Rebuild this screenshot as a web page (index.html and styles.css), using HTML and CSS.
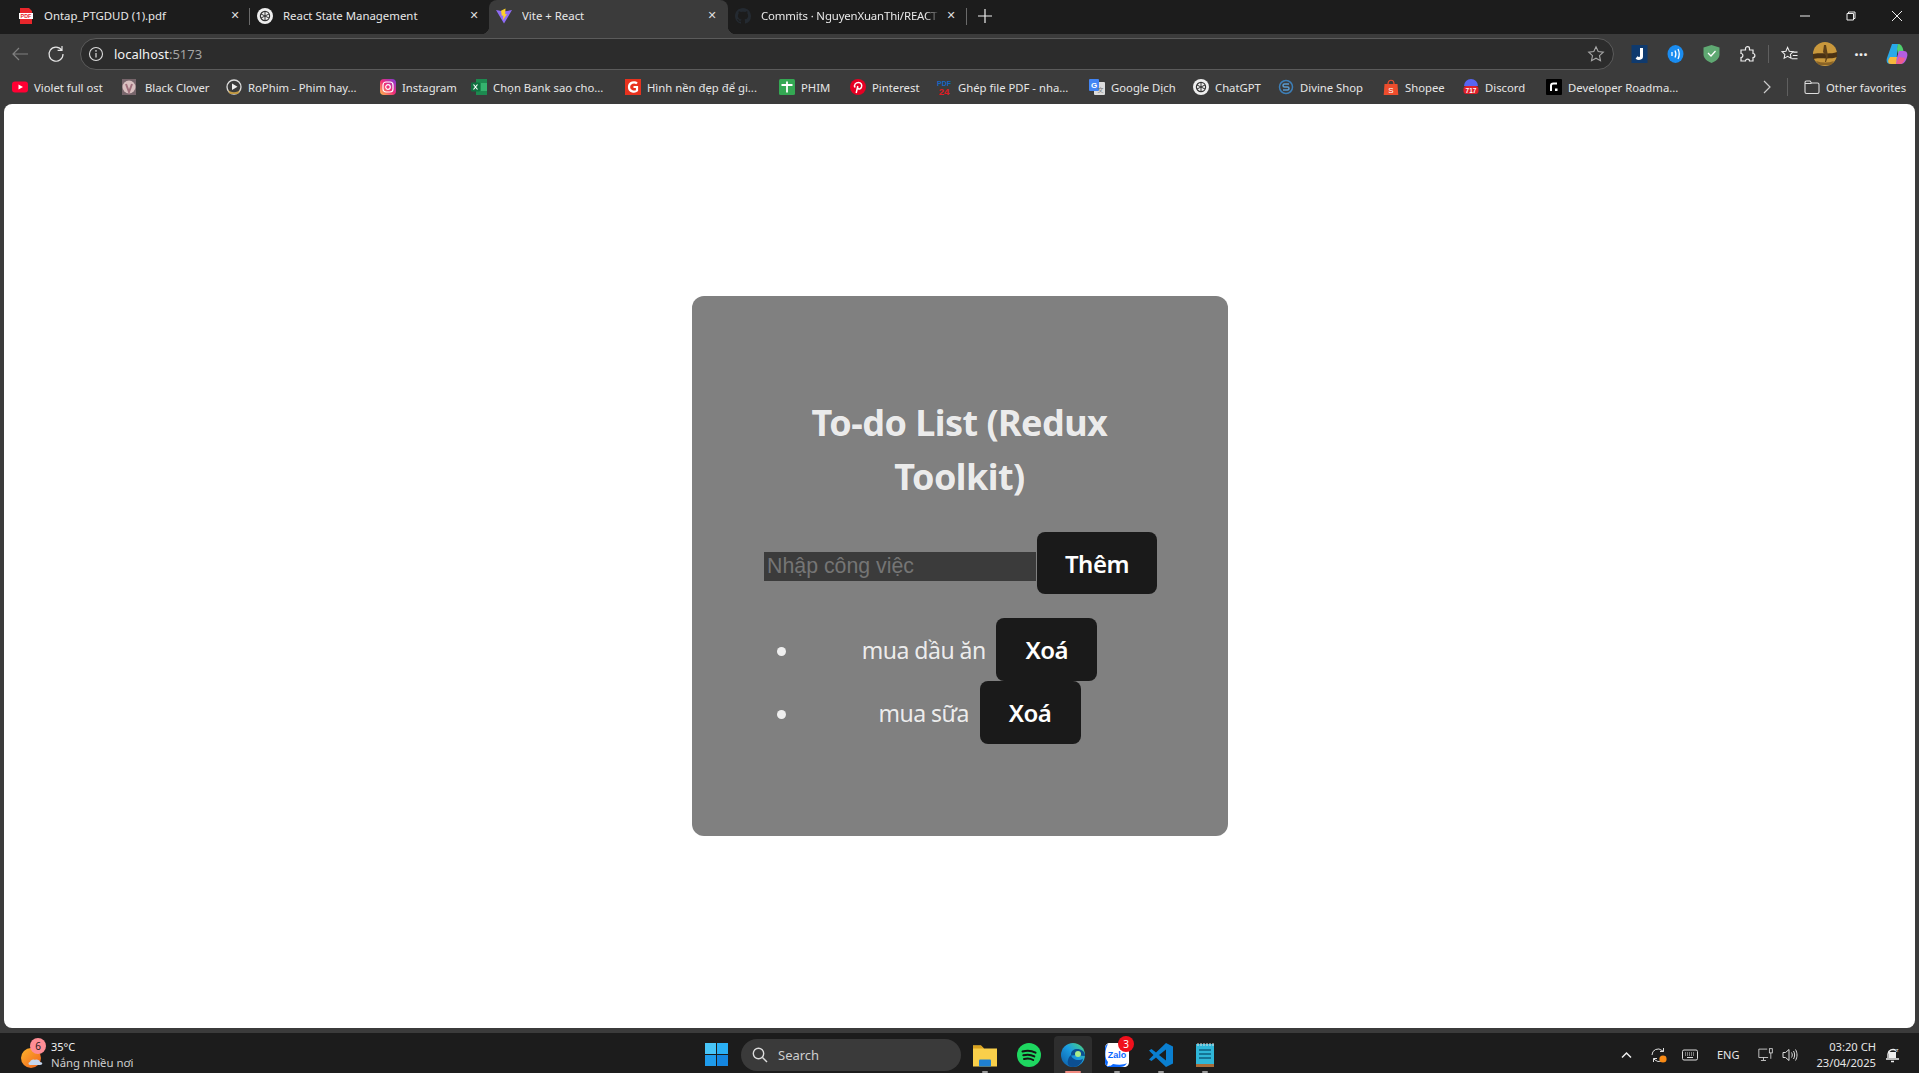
FILE: index.html
```html
<!DOCTYPE html>
<html lang="en">
<head>
    <meta charset="UTF-8">
    <meta name="viewport" content="width=device-width, initial-scale=1.0">
    <title>Vite + React</title>
    <link rel="stylesheet" href="styles.css">
</head>
<body>
    <!-- tabs -->
    <div class="tabstrip">
        <div class="tab tab-sep">
            <svg class="ico" viewBox="0 0 16 16"><path d="M2 0h9l3 3v13H2z" fill="#e8262b"/><rect x="1" y="5" width="14" height="6" fill="#fff"/><text x="8" y="10" font-size="5.4" font-weight="700" text-anchor="middle" fill="#e8262b" font-family="Liberation Sans">PDF</text></svg>
            <span class="tab-title">Ontap_PTGDUD (1).pdf</span>
            <span class="tab-close">&#x2715;</span>
        </div>
        <div class="tab">
            <svg class="ico" viewBox="0 0 16 16"><circle cx="8" cy="8" r="8" fill="#eee"/><circle cx="8" cy="8" r="4.6" fill="none" stroke="#333" stroke-width="1.2"/><path d="M4 6l8 4M4 10l8-4M8 3.5v9" stroke="#333" stroke-width="1"/></svg>
            <span class="tab-title">React State Management</span>
            <span class="tab-close">&#x2715;</span>
        </div>
        <div class="tab tab-active">
            <svg class="ico" viewBox="0 0 16 16"><path d="M0 2l8 1.5L16 2 8 15.5z" fill="#8f6cf6"/><path d="M9.5 0.5L5 2.8l.8 5 1.6-.4-.4 4.6L11 6l-1.8.3z" fill="#fdd22b"/></svg>
            <span class="tab-title">Vite + React</span>
            <span class="tab-close">&#x2715;</span>
        </div>
        <div class="tab tab-sep">
            <svg class="ico" viewBox="0 0 16 16"><path fill="#242a31" d="M8 0C3.58 0 0 3.58 0 8c0 3.54 2.29 6.53 5.47 7.59.4.07.55-.17.55-.38 0-.19-.01-.82-.01-1.49-2.01.37-2.53-.49-2.69-.94-.09-.23-.48-.94-.82-1.13-.28-.15-.68-.52-.01-.53.63-.01 1.08.58 1.23.82.72 1.21 1.87.87 2.33.66.07-.52.28-.87.51-1.07-1.78-.2-3.64-.89-3.64-3.95 0-.87.31-1.59.82-2.15-.08-.2-.36-1.02.08-2.12 0 0 .67-.21 2.2.82.64-.18 1.32-.27 2-.27s1.36.09 2 .27c1.53-1.04 2.2-.82 2.2-.82.44 1.1.16 1.92.08 2.12.51.56.82 1.27.82 2.15 0 3.07-1.87 3.75-3.65 3.95.29.25.54.73.54 1.48 0 1.07-.01 1.93-.01 2.2 0 .21.15.46.55.38A8.013 8.013 0 0016 8c0-4.42-3.58-8-8-8z"/></svg>
            <span class="tab-title tab-fade">Commits · NguyenXuanThi/REACT</span>
            <span class="tab-close">&#x2715;</span>
        </div>
        <svg class="new-tab" viewBox="0 0 14 14"><path d="M7 0v14M0 7h14" stroke="#eee" stroke-width="1.2"/></svg>
        <div class="win-controls">
            <svg viewBox="0 0 10 10"><path d="M0 5h10" stroke="#eee"/></svg>
            <svg viewBox="0 0 10 10"><path d="M2.5 2V1h6.5v6.5H8M1 2.5h6.5V9H1z" fill="none" stroke="#eee"/></svg>
            <svg viewBox="0 0 10 10"><path d="M0 0l10 10M10 0L0 10" stroke="#eee"/></svg>
        </div>
    </div>

    <!-- toolbar -->
    <div class="toolbar">
        <svg class="nav-btn nav-back" viewBox="0 0 18 18"><path d="M17 9H2M8 3L2 9l6 6" fill="none" stroke="#808080" stroke-width="1.2"/></svg>
        <svg class="nav-btn nav-reload" viewBox="0 0 18 18"><path d="M14.6 5A7 7 0 1 0 16 9M15 1v4.4h-4.4" fill="none" stroke="#e6e6e6" stroke-width="1.2"/></svg>
        <div class="address">
            <svg class="addr-info" viewBox="0 0 16 16"><circle cx="8" cy="8" r="6.5" fill="none" stroke="#ddd" stroke-width="1.1"/><path d="M8 7v4.5" stroke="#ddd" stroke-width="1.2"/><circle cx="8" cy="4.9" r=".8" fill="#ddd"/></svg>
            <span class="addr-url">localhost<span class="addr-port">:5173</span></span>
            <svg class="addr-star" viewBox="0 0 18 18"><path d="M9 1.8l2.2 4.7 5.1.6-3.8 3.5 1 5.1L9 13.2l-4.5 2.5 1-5.1L1.7 7.1l5.1-.6z" fill="none" stroke="#a8a8a8" stroke-width="1.1"/></svg>
        </div>
        <div class="ext-group">
            <span class="ext"><svg viewBox="0 0 16 18"><rect width="16" height="18" fill="#0f3a6e"/><path d="M10 3v8.500c0 2-3 2.500-5 1" fill="none" stroke="#fff" stroke-width="3"/></svg></span>
            <span class="ext"><svg viewBox="0 0 16 18"><ellipse cx="8" cy="9" rx="8" ry="9" fill="#1a8cf0"/><path d="M4.500 7v4M7.500 5.500c1 2 1 5 0 7M10.500 4c1.500 3 1.500 7 0 10" fill="none" stroke="#fff" stroke-width="1.300"/></svg></span>
            <span class="ext"><svg viewBox="0 0 16 18"><path d="M8 0l8 2.500v7c0 4-4 7-8 8.500-4-1.500-8-4.500-8-8.500v-7z" fill="#5fa872"/><path d="M4.500 8l3 3 4.500-5" fill="none" stroke="#fff" stroke-width="1.300"/></svg></span>
            <span class="ext"><svg viewBox="0 0 16 18"><path d="M6 3.500C6 1 10 1 10 3.500V5h3.500v3.500c2.500 0 2.500 4 0 4V16H10c0-2.500-4-2.500-4 0H1.500v-3.500c2.500 0 2.500-4 0-4V5H6z" fill="none" stroke="#eee" stroke-width="1.200"/></svg></span>
            <span class="ext-sep"></span>
            <span class="ext"><svg viewBox="0 0 18 18"><path d="M7 2l1.800 4 4.200.5-3.100 2.900.8 4.200L7 11.500l-3.700 2.100.8-4.200L1 6.500 5.200 6z" fill="none" stroke="#eee" stroke-width="1.100"/><path d="M13 7h4.500M12.500 10.500h5M11.500 14h6" stroke="#eee" stroke-width="1.100"/></svg></span>
            <span class="ext"><svg class="avatar" viewBox="0 0 24 24"><circle cx="12" cy="12" r="12" fill="#c9983c"/><path d="M0 12c6-2 16 1 24-2v5C16 18 6 15 0 17z" fill="#4a3214"/><path d="M11 3l2 0 2 11-2 6h-1l1-6-3-4z" fill="#5e4119"/><path d="M3 19c6 2 12 2 18 0l-3 4H6z" fill="#8a6426"/></svg></span>
            <span class="ext ext-dots">···</span>
            <span class="ext"><svg class="copilot" viewBox="0 0 22 22"><path d="M6 1h6l-2 20H4C1 21 0 18 1 15z" fill="#28a9e8"/><path d="M12 1c3 0 4 2 5 5l2 8-6 0-2-8z" fill="#4fd06e"/><path d="M13 8h5c3 0 4 3 3 6-1 4-3 7-6 7h-6z" fill="#b45ee0"/><path d="M4 14h7l-1 7H5C2 21 1 18 4 14z" fill="#f6b73c"/><path d="M10 21h4c2 0 4-2 5-6l-6-1z" fill="#ef5d8c"/></svg></span>
        </div>
    </div>

    <!-- bookmarks -->
    <div class="bookmarks">
        <div class="bm"><svg class="ico" viewBox="0 0 16 16"><rect y="2.500" width="16" height="11" rx="3" fill="#ff0033"/><path d="M6.500 5.500v5L11 8z" fill="#fff"/></svg><span>Violet full ost</span></div>
        <div class="bm bm-wide"><svg class="ico" viewBox="0 0 16 16"><rect x="1" width="14" height="16" fill="#77656b"/><circle cx="8" cy="8" r="6.500" fill="#d9c0c0"/><path d="M5 5l3 8 3-8" fill="none" stroke="#a0707c" stroke-width="2"/></svg><span>Black Clover</span></div>
        <div class="bm"><svg class="ico" viewBox="0 0 16 16"><circle cx="8" cy="8" r="7" fill="none" stroke="#ddd" stroke-width="1.300"/><path d="M6 4.500v6.500L11.500 7.800z" fill="#eee"/><path d="M1.500 10.500c3 3.500 10 3.500 13 0L12 15H4z" fill="#c29a44"/></svg><span>RoPhim - Phim hay...</span></div>
        <div class="bm"><svg class="ico" viewBox="0 0 16 16"><defs><linearGradient id="ig" x1="0" y1="1" x2="1" y2="0"><stop offset="0" stop-color="#fdc04c"/><stop offset=".5" stop-color="#f02c78"/><stop offset="1" stop-color="#7b3be0"/></linearGradient></defs><rect width="16" height="16" rx="4" fill="url(#ig)"/><rect x="3" y="3" width="10" height="10" rx="3" fill="none" stroke="#fff" stroke-width="1.200"/><circle cx="8" cy="8" r="2.300" fill="none" stroke="#fff" stroke-width="1.200"/></svg><span>Instagram</span></div>
        <div class="bm"><svg class="ico" viewBox="0 0 16 16"><rect x="5" width="11" height="16" fill="#1d8a50"/><rect x="10" y="4" width="6" height="8" fill="#35b36e"/><rect y="3.500" width="9" height="9" rx="1" fill="#107040"/><path d="M2.500 5.500l4 5M6.500 5.500l-4 5" stroke="#fff" stroke-width="1.200"/></svg><span>Chọn Bank sao cho...</span></div>
        <div class="bm"><svg class="ico" viewBox="0 0 16 16"><rect width="16" height="16" fill="#e8321e"/><path d="M12 4.500C10 2.500 4 3 4 8s6 5.500 8 3.500V8H8.500" fill="none" stroke="#fff" stroke-width="2.200"/></svg><span>Hình nền đẹp để gi...</span></div>
        <div class="bm"><svg class="ico" viewBox="0 0 16 16"><rect width="16" height="16" rx="1.500" fill="#34a853"/><path d="M2.500 6h11M8 2.500v11" stroke="#fff" stroke-width="1.800"/></svg><span>PHIM</span></div>
        <div class="bm"><svg class="ico" viewBox="0 0 16 16"><circle cx="8" cy="8" r="8" fill="#e60023"/><path d="M6.200 14l1.600-7M5 8.500C3.500 5.500 6 3.500 8.500 3.500c2.500 0 3.800 2 3 4.500-.8 2.300-3 2.500-3.900 1" fill="none" stroke="#fff" stroke-width="1.500"/></svg><span>Pinterest</span></div>
        <div class="bm"><svg class="ico" viewBox="0 0 16 16"><text x="8" y="7" font-size="7" font-weight="700" text-anchor="middle" fill="#1467c4" font-family="Liberation Sans">PDF</text><text x="8" y="15.500" font-size="9.500" font-weight="700" text-anchor="middle" fill="#e01b22" font-family="Liberation Sans">24</text></svg><span>Ghép file PDF - nha...</span></div>
        <div class="bm"><svg class="ico" viewBox="0 0 16 16"><rect x="5" y="3" width="11" height="13" rx="1" fill="#dcdcdc"/><rect width="10" height="12" rx="1" fill="#4285f4"/><text x="5" y="9" font-size="8" font-weight="700" text-anchor="middle" fill="#fff" font-family="Liberation Sans">G</text><text x="11.500" y="13" font-size="6" text-anchor="middle" fill="#777" font-family="Noto Sans CJK SC">文</text></svg><span>Google Dịch</span></div>
        <div class="bm"><svg class="ico" viewBox="0 0 16 16"><circle cx="8" cy="8" r="8" fill="#eee"/><circle cx="8" cy="8" r="4.600" fill="none" stroke="#333" stroke-width="1.200"/><path d="M4 6l8 4M4 10l8-4M8 3.500v9" stroke="#333"/></svg><span>ChatGPT</span></div>
        <div class="bm"><svg class="ico" viewBox="0 0 16 16"><circle cx="8" cy="8" r="6.500" fill="none" stroke="#3d7fb8" stroke-width="1.500"/><path d="M11 5H6.500C4.500 5 4.500 8 6.500 8h3c2 0 2 3 0 3H5" fill="none" stroke="#5a9bd0" stroke-width="1.500"/></svg><span>Divine Shop</span></div>
        <div class="bm"><svg class="ico" viewBox="0 0 16 16"><path d="M1.500 5h13l.8 11H.7z" fill="#ee4d2d"/><path d="M5 5c0-5 6-5 6 0" fill="none" stroke="#ee4d2d" stroke-width="1.200"/><text x="8" y="14" font-size="8" text-anchor="middle" fill="#fff" font-family="Liberation Sans">S</text></svg><span>Shopee</span></div>
        <div class="bm"><svg class="ico" viewBox="0 0 16 16"><path d="M1 7a7 7 0 0 1 14 0z" fill="#5865f2"/><rect x=".5" y="7" width="15" height="8" rx="3" fill="#e0202a"/><text x="8" y="14" font-size="6.500" font-weight="700" text-anchor="middle" fill="#fff" font-family="Liberation Sans">717</text></svg><span>Discord</span></div>
        <div class="bm"><svg class="ico" viewBox="0 0 16 16"><rect width="16" height="16" rx="1" fill="#000"/><path d="M5 12V6.500C5 5 6 4.500 7.500 4.500H11" fill="none" stroke="#fff" stroke-width="2"/><rect x="9" y="9.500" width="2.500" height="2.500" fill="#fff"/></svg><span>Developer Roadma...</span></div>
        <svg class="bm-more" viewBox="0 0 8 14"><path d="M1 1l6 6-6 6" fill="none" stroke="#ccc" stroke-width="1.200"/></svg>
        <span class="bm-sep"></span>
        <div class="bm"><svg class="ico" viewBox="0 0 16 16"><path d="M1 13V3.500C1 2.500 1.500 2 2.500 2H6l1.500 2h6c1 0 1.500.5 1.500 1.500V13c0 1-.5 1.500-1.500 1.500h-11C1.500 14.500 1 14 1 13zM1 4.500h6.500" fill="none" stroke="#ddd" stroke-width="1.100"/></svg><span>Other favorites</span></div>
    </div>

    <!-- page -->
    <main class="page">
        <div class="card">
            <h1>To-do List (Redux Toolkit)</h1>
            <div class="add-form">
                <input type="text" class="todo-input" placeholder="Nhập công việc">
                <button class="btn btn-add">Thêm</button>
            </div>
            <ul class="todo-list">
                <li>mua dầu ăn <button class="btn btn-del">Xoá</button></li>
                <li>mua sữa <button class="btn btn-del">Xoá</button></li>
            </ul>
        </div>
    </main>

    <!-- taskbar -->
    <footer class="taskbar">
        <div class="weather">
            <svg class="weather-ico" viewBox="0 0 23 20"><defs><linearGradient id="sun" x1="0" y1="0" x2="1" y2="1"><stop offset="0" stop-color="#fdb52c"/><stop offset="1" stop-color="#f0601e"/></linearGradient></defs><circle cx="10" cy="10" r="10" fill="url(#sun)"/><path d="M9 17c-2 0-2-3 0-3 .5-2 3-3 5-2 1.500-1 5 0 5 2 3 0 3 3 0 3z" fill="#c5d6ee"/></svg>
            <span class="weather-badge">6</span>
            <div class="weather-text">
                <span>35°C</span>
                <span class="weather-sub">Nắng nhiều nơi</span>
            </div>
        </div>
        <div class="tb-center">
            <svg class="start-ico" viewBox="0 0 23 23"><rect width="11" height="11" fill="#48c5f8"/><rect x="12" width="11" height="11" fill="#2ab0f5"/><rect y="12" width="11" height="11" fill="#1f9cec"/><rect x="12" y="12" width="11" height="11" fill="#1486e0"/></svg>
            <div class="search-pill">
                <svg viewBox="0 0 16 16"><circle cx="6.500" cy="6.500" r="5.200" fill="none" stroke="#ddd" stroke-width="1.400"/><path d="M10.500 10.500l4.500 4.500" stroke="#ddd" stroke-width="1.400"/></svg>
                <span>Search</span>
            </div>
            <div class="app app-open"><svg viewBox="0 0 24 23"><path d="M0 2h8l3 3h13v18H0z" fill="#f9cf4a"/><path d="M0 2h8l3 3H0z" fill="#d9a11f"/><rect x="6" y="16" width="12" height="7" rx="1" fill="#1f80d0"/></svg></div>
            <div class="app"><svg viewBox="0 0 24 24"><circle cx="12" cy="12" r="12" fill="#1ed760"/><path d="M5.500 8.500c4-1.200 9-1 13 1.200M6.300 12.300c3.500-1 7.700-.8 11 1.100M7 16c3-.8 6.500-.6 9.200 1" fill="none" stroke="#141414" stroke-width="2" stroke-linecap="round"/></svg></div>
            <div class="app app-active"><svg viewBox="0 0 24 24"><defs><linearGradient id="edge" x1="0" y1="1" x2="1" y2="0"><stop offset="0" stop-color="#0c59a4"/><stop offset=".55" stop-color="#1b9de2"/><stop offset="1" stop-color="#4fdb72"/></linearGradient></defs><circle cx="12" cy="12" r="12" fill="url(#edge)"/><path d="M24 13c0-5-4-7-8-7-3 0-6 2-6 5 0 4 4 6 7 6 2 0 4-.5 5-1.500C21 21 16 24 12 24c-5 0-6-4-5-7 .5-2 1-3 3-5" fill="#0c4f92"/><circle cx="17" cy="11" r="3" fill="#a8ed8c"/></svg></div>
            <div class="app app-open"><svg viewBox="0 0 24 24"><path d="M5 0h14c3 0 5 2 5 5v14c0 3-2 5-5 5H5c-3 0-5-2-5-5V5c0-3 2-5 5-5z" fill="#fff"/><path d="M3 1C0 6-1 15 3 19l-1 4c4 0 5-1 6-2 5 1 11 1 14-1-2 3-4 4-7 4H5c-3 0-5-2-5-5V5c0-2 1-3 3-4z" fill="#0a68ff"/><text x="12" y="15" font-size="9" font-weight="700" text-anchor="middle" fill="#0a68ff" font-family="Liberation Sans">Zalo</text></svg><span class="app-badge">3</span></div>
            <div class="app app-open"><svg viewBox="0 0 24 24"><path d="M17 0l7 3.500v17L17 24 7 14.500 2.500 18 0 16.500 4.500 12 0 7.500 2.500 6 7 9.500z" fill="#0a7fd0"/><path d="M17 6.500L10 12l7 5.500z" fill="#1c1c1c"/></svg></div>
            <div class="app app-open"><svg viewBox="0 0 18 24"><rect y="1" width="18" height="23" fill="#2fb6d8"/><path d="M2 0v3M5 0v3M8 0v3M11 0v3M14 0v3M17 0v3" stroke="#ddd"/><path d="M3 7h12M3 11h12M3 15h12" stroke="#0e5f80" stroke-width="1.500"/><rect y="21" width="18" height="3" fill="#a86d3a"/></svg></div>
        </div>
        <div class="tray">
            <svg class="tray-chevron" viewBox="0 0 11 7"><path d="M1 6l4.500-4.500L10 6" fill="none" stroke="#eee" stroke-width="1.500"/></svg>
            <svg class="tray-sync" viewBox="0 0 16 16"><path d="M1 8a6 6 0 0 1 10-4.500l1.500 1M12.500 1v3.500H9M14 9a6 6 0 0 1-10 4L2.500 11.500M2.500 15v-3.500H6" fill="none" stroke="#ddd"/><circle cx="12" cy="12" r="3.600" fill="#f98a14"/></svg>
            <svg viewBox="0 0 16 12"><rect x=".5" y="1" width="15" height="10" rx="1.500" fill="none" stroke="#ddd"/><path d="M3 4h10M3 6h10" stroke="#ddd" stroke-dasharray="1 1"/><path d="M5 8.500h6" stroke="#ddd"/></svg>
            <span class="tray-lang">ENG</span>
            <svg viewBox="0 0 19 17"><path d="M12 11.500H1V1.500h10M6.500 11.500v3M3.500 15h6" fill="none" stroke="#ddd"/><rect x="13.500" y="1" width="3.500" height="5" fill="none" stroke="#ddd"/><path d="M15.200 6v7" stroke="#ddd"/></svg>
            <svg viewBox="0 0 16 14"><path d="M1 4.500h2.500L7 1.500v11l-3.500-3H1z" fill="none" stroke="#ddd"/><path d="M9.500 4.500c1 1.500 1 3.500 0 5M11.500 3c1.500 2.500 1.500 5.500 0 8M13.500 1.500c2 3.500 2 7.500 0 11" fill="none" stroke="#ddd"/></svg>
            <div class="clock">
                <span>03:20 CH</span>
                <span>23/04/2025</span>
            </div>
            <svg class="tray-bell" viewBox="0 0 14 16"><path d="M2 11V7a5 5 0 0 1 8-3.500M0 12h13M5 14.500h3" fill="none" stroke="#eee" stroke-width="1.400"/><rect x="3" y="5" width="7" height="6" fill="#eee"/><text x="11" y="5" font-size="6" text-anchor="middle" fill="#eee" font-family="Liberation Sans">z</text></svg>
        </div>
    </footer>
</body>
</html>
```

FILE: styles.css
```css
* {
    box-sizing: border-box;
}

body {
    margin: 0;
    height: 1073px;
    overflow: hidden;
    background-color: #3b3b3b;
    color: #e6e6e6;
    font-family: 'Noto Sans', sans-serif;
    font-size: 12px;
    display: flex;
    flex-direction: column;
}

.ico {
    width: 16px;
    height: 16px;
    flex: none;
}

/* tabs */
.tabstrip {
    height: 34px;
    background-color: #1c1c1c;
    display: flex;
    padding-left: 11px;
    flex: none;
}

.tab {
    width: 239px;
    height: 34px;
    display: flex;
    align-items: center;
    gap: 10px;
    padding: 0 10px 3px 7px;
    position: relative;
}

.tab:nth-child(1),
.tab:nth-child(2) {
    padding-right: 9px;
}

.tab-sep::after {
    content: '';
    position: absolute;
    right: 0;
    top: 8px;
    height: 17px;
    width: 1px;
    background-color: #6a6a6a;
}

.tab-active {
    background-color: #3b3b3b;
    border-radius: 8px 8px 0 0;
}

.tab-active::before,
.tab-active::after {
    content: '';
    position: absolute;
    bottom: 0;
    width: 8px;
    height: 8px;
}

.tab-active::before {
    left: -8px;
    background: radial-gradient(circle at 0 0, transparent 8px, #3b3b3b 8.5px);
}

.tab-active::after {
    right: -8px;
    background: radial-gradient(circle at 100% 0, transparent 8px, #3b3b3b 8.5px);
}

.tab-title {
    flex: 1;
    min-width: 0;
    overflow: hidden;
    white-space: nowrap;
    font-size: 11.4px;
    color: #e8e8e8;
}

.tab-fade {
    margin-right: -5px;
    letter-spacing: -0.15px;
    -webkit-mask-image: linear-gradient(to right, #000 92%, transparent);
    mask-image: linear-gradient(to right, #000 92%, transparent);
}

.tab-close {
    width: 12px;
    text-align: center;
    font-size: 11px;
    color: #dcdcdc;
    font-family: 'DejaVu Sans', sans-serif;
}

.new-tab {
    width: 14px;
    height: 14px;
    margin: 9px 0 0 11px;
}

.win-controls {
    margin-left: auto;
    display: flex;
    align-items: center;
    gap: 36px;
    padding: 0 17px 2px 0;
}

.win-controls svg {
    width: 10px;
    height: 10px;
}

/* toolbar */
.toolbar {
    height: 36px;
    display: flex;
    align-items: center;
    flex: none;
    padding-top: 4px;
}

.nav-btn {
    width: 18px;
    height: 18px;
    flex: none;
}

.nav-back {
    margin: 0 9px 0 11px;
}

.nav-reload {
    margin: 0 15px 0 9px;
}

.address {
    flex: 1;
    height: 32px;
    background-color: #2c2c2c;
    border: 1px solid #5b5b5b;
    border-radius: 16px;
    display: flex;
    align-items: center;
    padding: 0 8px 0 7px;
}

.addr-info {
    width: 16px;
    height: 16px;
}

.addr-url {
    margin-left: 10px;
    font-size: 13px;
    color: #f2f2f2;
    flex: 1;
}

.addr-port {
    color: #a4a4a4;
}

.addr-star {
    width: 18px;
    height: 18px;
}

.ext-group {
    display: flex;
    align-items: center;
    margin: 0 4px 0 7px;
}

.ext {
    width: 36px;
    height: 30px;
    display: flex;
    align-items: center;
    justify-content: center;
}

.ext svg {
    width: 17px;
    height: 18px;
}

.ext svg.copilot {
    width: 22px;
    height: 22px;
}

.ext svg.avatar {
    width: 24px;
    height: 24px;
}

.ext-sep {
    width: 1px;
    height: 18px;
    margin: 0 2px 0 3px;
    background-color: #5f5f5f;
}

.ext-dots {
    font-size: 16px;
    font-weight: 700;
    color: #eee;
}

/* bookmarks */
.bookmarks {
    height: 34px;
    display: grid;
    grid-template-columns: 109px 105px 154px 91px 154px 154px 71px 86px 153px 104px 85px 105px 80px 83px 217px 24px 17px auto;
    align-items: center;
    padding-left: 12px;
    flex: none;
}

.bm {
    display: flex;
    align-items: center;
    gap: 6px;
    white-space: nowrap;
    font-size: 11.3px;
    color: #e6e6e6;
}

.bm-wide {
    gap: 8px;
}

.bm-more {
    width: 8px;
    height: 14px;
}

.bm-sep {
    width: 1px;
    height: 18px;
    background-color: #5f5f5f;
}

/* page */
.page {
    height: 924px;
    margin: 0 4px;
    background-color: #fff;
    border-radius: 8px;
    display: flex;
    align-items: center;
    justify-content: center;
    flex: none;
}

.card {
    width: 536px;
    padding: 100px 64px 92px;
    background-color: #808080;
    border-radius: 12px;
    color: rgba(255, 255, 255, 0.87);
    text-align: center;
}

h1 {
    margin: 0 0 28px;
    font-size: 36px;
    line-height: 54px;
    font-weight: 700;
    letter-spacing: -0.55px;
}

.add-form {
    display: flex;
    align-items: flex-start;
    justify-content: center;
    gap: 1px;
    padding-left: 2px;
}

.todo-input {
    width: 272px;
    height: 29px;
    margin-top: 20px;
    padding: 0 3px;
    border: none;
    background-color: #3b3b3b;
    color: #fff;
    font-family: 'Liberation Sans', sans-serif;
    font-size: 21.33px;
}

.todo-input::placeholder {
    color: #757575;
}

.btn {
    height: 62px;
    border: none;
    border-radius: 8px;
    background-color: #1a1a1a;
    color: #fff;
    font-family: 'Noto Sans', sans-serif;
    font-size: 24px;
    font-weight: 600;
    letter-spacing: -0.5px;
    padding: 0;
}

.btn-add {
    width: 120px;
}

.btn-del {
    width: 101px;
    height: 63px;
    margin-left: 5px;
    vertical-align: top;
}

.todo-list {
    width: 393px;
    margin: 24px auto 0;
    padding-left: 40px;
    font-size: 23px;
    letter-spacing: -0.5px;
    list-style: none;
}

.todo-list li {
    height: 63px;
    line-height: 65px;
    position: relative;
}

.todo-list li::before {
    content: '';
    position: absolute;
    left: -26.5px;
    top: 29px;
    width: 9px;
    height: 9px;
    border-radius: 50%;
    background-color: rgba(255, 255, 255, 0.87);
}

/* taskbar */
.taskbar {
    margin-top: 5px;
    height: 40px;
    padding-top: 3px;
    background-color: #1c1c1c;
    display: grid;
    grid-template-columns: 705px auto 1fr;
    align-items: center;
    flex: none;
}

.weather {
    display: flex;
    align-items: center;
    position: relative;
    padding-left: 21px;
    font-size: 11px;
    color: #f0f0f0;
}

.weather-ico {
    width: 23px;
    height: 20px;
    margin-top: 6px;
}

.weather-badge {
    position: absolute;
    left: 30px;
    top: -1px;
    width: 16px;
    height: 16px;
    border-radius: 50%;
    background-color: #ff8d95;
    color: #1c1c1c;
    font-size: 10px;
    line-height: 16px;
    text-align: center;
}

.weather-text {
    display: flex;
    flex-direction: column;
    margin-left: 7px;
    line-height: 16px;
}

.weather-sub {
    color: #cfcfcf;
    font-size: 11.4px;
}

.tb-center {
    display: flex;
    align-items: center;
}

.start-ico {
    width: 23px;
    height: 23px;
    margin-right: 13px;
}

.search-pill {
    width: 220px;
    height: 32px;
    border-radius: 16px;
    background-color: #3a3a3a;
    display: flex;
    align-items: center;
    gap: 10px;
    padding-left: 11px;
    margin-right: 2px;
    color: #cfcfcf;
    font-size: 13px;
}

.search-pill svg {
    width: 16px;
    height: 16px;
}

.app {
    width: 44px;
    height: 37px;
    display: flex;
    align-items: center;
    justify-content: center;
    position: relative;
}

.app svg {
    width: 24px;
    height: 24px;
}

.app-open::after,
.app-active::after {
    content: '';
    position: absolute;
    bottom: 0;
    left: 50%;
    width: 6px;
    height: 2px;
    margin-left: -3px;
    background-color: #9a9a9a;
    border-radius: 1px;
}

.app-active::before {
    content: '';
    position: absolute;
    inset: 0 3px;
    background-color: #2e2e2e;
    border-radius: 4px 4px 0 0;
}

.app-active svg {
    position: relative;
}

.app-active::after {
    width: 16px;
    margin-left: -8px;
    background-color: #f08a80;
}

.app-badge {
    position: absolute;
    right: 5px;
    top: 0;
    width: 16px;
    height: 16px;
    border-radius: 50%;
    background-color: #f0101c;
    color: #fff;
    font-size: 10px;
    line-height: 16px;
    text-align: center;
}

.tray {
    justify-self: end;
    display: grid;
    grid-template-columns: 30px 31px 35px 41px 24px 34px 70px 13px;
    align-items: center;
    padding-right: 20px;
    color: #e6e6e6;
}

.tray svg {
    height: 16px;
    width: 16px;
}

.tray svg.tray-chevron {
    width: 11px;
}

.tray-lang {
    font-size: 11px;
}

.clock {
    display: flex;
    flex-direction: column;
    align-items: flex-end;
    padding-right: 10px;
    font-size: 11.2px;
    line-height: 16px;
    white-space: nowrap;
}

.tray svg.tray-bell {
    width: 14px;
}
```
